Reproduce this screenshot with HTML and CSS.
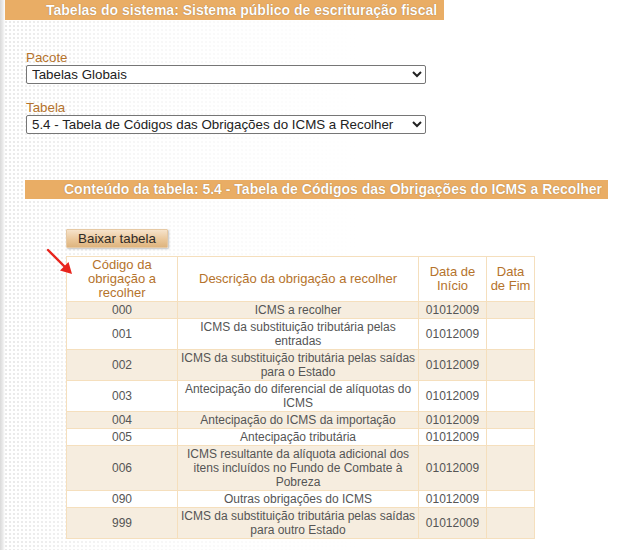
FILE: index.html
```html
<!DOCTYPE html>
<html lang="pt-BR">
<head>
<meta charset="utf-8">
<title>Tabelas do sistema</title>
<link rel="stylesheet" href="styles.css">
</head>
<body>
<div class="page">
  <h1 class="bar bar-top">Tabelas do sistema: Sistema público de escrituração fiscal</h1>
  <div class="form">
    <div class="field">
      <label class="label" for="pacote">Pacote</label>
      <select id="pacote" class="select"><option>Tabelas Globais</option></select>
    </div>
    <div class="field">
      <label class="label" for="tabela">Tabela</label>
      <select id="tabela" class="select"><option>5.4 - Tabela de Códigos das Obrigações do ICMS a Recolher</option></select>
    </div>
  </div>
  <div class="content">
    <h2 class="bar bar-content">Conteúdo da tabela: 5.4 - Tabela de Códigos das Obrigações do ICMS a Recolher</h2>
    <div class="table-area">
      <button class="btn" type="button">Baixar tabela</button>
      <div class="table-wrap">
        <svg class="arrow" width="30" height="30" viewBox="0 0 30 30" aria-hidden="true">
          <line x1="2" y1="2" x2="21" y2="21" stroke="#e8241c" stroke-width="2.4" stroke-linecap="round"/>
          <polygon points="26,26 14,22.5 22.5,14" fill="#e8241c"/>
        </svg>
        <table class="data">
          <colgroup>
            <col class="c1"><col class="c2"><col class="c3"><col class="c4">
          </colgroup>
          <thead>
            <tr><th>Código da obrigação a recolher</th><th>Descrição da obrigação a recolher</th><th>Data de Início</th><th>Data de Fim</th></tr>
          </thead>
          <tbody>
            <tr class="odd"><td>000</td><td>ICMS a recolher</td><td>01012009</td><td></td></tr>
            <tr><td>001</td><td>ICMS da substituição tributária pelas entradas</td><td>01012009</td><td></td></tr>
            <tr class="odd"><td>002</td><td>ICMS da substituição tributária pelas saídas para o Estado</td><td>01012009</td><td></td></tr>
            <tr><td>003</td><td>Antecipação do diferencial de alíquotas do ICMS</td><td>01012009</td><td></td></tr>
            <tr class="odd"><td>004</td><td>Antecipação do ICMS da importação</td><td>01012009</td><td></td></tr>
            <tr><td>005</td><td>Antecipação tributária</td><td>01012009</td><td></td></tr>
            <tr class="odd"><td>006</td><td>ICMS resultante da alíquota adicional dos itens incluídos no Fundo de Combate à Pobreza</td><td>01012009</td><td></td></tr>
            <tr><td>090</td><td>Outras obrigações do ICMS</td><td>01012009</td><td></td></tr>
            <tr class="odd"><td>999</td><td>ICMS da substituição tributária pelas saídas para outro Estado</td><td>01012009</td><td></td></tr>
          </tbody>
        </table>
      </div>
    </div>
  </div>
</div>
</body>
</html>
```
FILE: styles.css
```css
html, body {
  margin: 0;
  padding: 0;
}
body {
  font-family: "Liberation Sans", Arial, sans-serif;
  font-size: 13.33px;
  color: #333;
  min-height: 550px;
  background:
    linear-gradient(to right, #d9d9d9 0, #ececec 3px, rgba(255,255,255,0) 5px),
    linear-gradient(to right, rgba(255,255,255,0) 0, rgba(255,255,255,0.6) 120px, #fff 360px),
    radial-gradient(circle, #e9e9e9 1.1px, transparent 1.3px) 0 0 / 4px 4px,
    #fff;
}
.page {
  padding-left: 5px;
}
.bar {
  display: inline-block;
  margin: 0;
  background: #e9ad65;
  color: #fff;
  font-weight: bold;
  font-size: 14px;
  line-height: 20px;
  height: 20px;
  text-shadow: 0 0 1px rgba(90, 50, 10, 0.6);
  white-space: nowrap;
}
.bar-top {
  padding: 0 7px 0 41px;
}
.form {
  padding: 30px 0 0 21px;
  display: flex;
  flex-direction: column;
  gap: 16px;
}
.field {
  display: flex;
  flex-direction: column;
}
.label {
  color: #b5732c;
  font-size: 13.33px;
  line-height: 15px;
}
.select {
  width: 400px;
  height: 19px;
  font-family: "Liberation Sans", Arial, sans-serif;
  font-size: 13.33px;
  color: #222;
  border: 1px solid #767676;
  border-radius: 2px;
  padding: 0 1px;
  background: #fff;
}
.content {
  padding: 46px 0 0 20px;
}
.bar-content {
  padding: 0 6px 0 39px;
  height: 19px;
  line-height: 19px;
}
.table-area {
  padding: 30px 0 0 41px;
  display: flex;
  flex-direction: column;
  align-items: flex-start;
  gap: 8px;
}
.btn {
  font-family: "Liberation Sans", Arial, sans-serif;
  font-size: 13.33px;
  color: #2e2a26;
  height: 19px;
  padding: 0 8px;
  width: 102px;
  border: 1px solid #e6c9a4;
  border-radius: 1px;
  background: linear-gradient(#f6e3cb, #e9c597 60%, #deb47f);
  box-shadow: 1px 1px 2px rgba(0, 0, 0, 0.25);
  line-height: 16px;
}
.table-wrap {
  position: relative;
}
.arrow {
  position: absolute;
  left: -20px;
  top: -8px;
}
.data {
  border-collapse: collapse;
  width: 468px;
  table-layout: fixed;
  font-size: 12px;
  line-height: 14px;
}
.c1 { width: 111px; }
.c2 { width: 241px; }
.c3 { width: 68px; }
.c4 { width: 48px; }
.data th, .data td {
  border: 1px solid #f5dfbd;
  padding: 1px 2px;
  text-align: center;
  vertical-align: middle;
}
.data th {
  color: #b5732c;
  font-weight: normal;
  font-size: 13px;
  background: #fff;
}
.data td {
  color: #555;
  background: #fff;
}
.data tr.odd td {
  background: #f6eddf;
}
```
